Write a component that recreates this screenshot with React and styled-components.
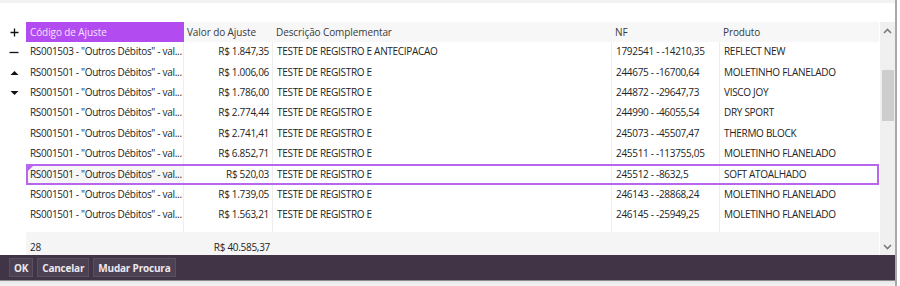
import React from 'react';
import styled, { createGlobalStyle } from 'styled-components';

const GlobalStyle = createGlobalStyle`
  body {
    margin: 0;
    background: #fff;
    font-family: 'Open Sans', 'Noto Sans', sans-serif;
  }
`;

const COLS = '26px 158px 89px 339px 108px 159px';

const Window = styled.div`
  width: 895px;
  height: 286px;
  border-right: 2px solid #a9a9a9;
  display: flex;
  flex-direction: column;
  background: #fff;
`;

const TopStrip = styled.div`
  height: 3px;
  background: #f2f2f2;
`;

const Body = styled.div`
  display: flex;
  padding-top: 19px;
  height: 233px;
`;

const Grid = styled.div`
  width: 879px;
  display: flex;
  flex-direction: column;
`;

const Row = styled.div`
  display: grid;
  grid-template-columns: ${COLS};
  height: ${p => p.h || 20.4}px;
  font-size: 10px;
  letter-spacing: -0.3px;
  color: #242424;
`;

const Gutter = styled.div`
  display: flex;
  align-items: center;
  justify-content: center;
  padding-left: 2px;
  background: #fff;
`;

const HeadCell = styled.div`
  display: flex;
  align-items: center;
  padding-left: ${p => (p.first ? 4 : 3)}px;
  background: ${p => (p.active ? '#b24bf0' : '#f7f7f7')};
  color: ${p => (p.active ? '#f3e2ff' : '#3a3a3a')};
  letter-spacing: -0.1px;
`;

const Cell = styled.div`
  display: flex;
  align-items: center;
  justify-content: ${p => (p.right ? 'flex-end' : 'flex-start')};
  padding: 0 ${p => (p.right ? 3 : 0)}px 2px ${p => (p.right ? 0 : 4)}px;
  border-right: 1px solid ${p => (p.last ? 'transparent' : '#eeeeee')};
  white-space: nowrap;
  overflow: hidden;
  background: ${p => (p.focus ? '#f6f6f6' : '#fff')};
`;

const SelRow = styled(Row)`
  position: relative;
  &::after {
    content: '';
    position: absolute;
    left: 26px;
    right: 0;
    top: 0;
    bottom: 0;
    border: 2px solid #b866ee;
    pointer-events: none;
  }
`;

const Corner = styled.div`
  position: absolute;
  left: 28px;
  top: 2px;
  width: 0;
  height: 0;
  border-top: 5px solid #b866ee;
  border-right: 5px solid transparent;
`;

const Filler = styled.div`
  display: grid;
  grid-template-columns: ${COLS};
  flex: 1;
`;

const FillCell = styled.div`
  border-right: 1px solid ${p => (p.line ? '#eeeeee' : 'transparent')};
`;

const Footer = styled.div`
  display: grid;
  grid-template-columns: ${COLS};
  height: 23px;
  font-size: 10px;
  letter-spacing: -0.3px;
  color: #242424;
`;

const FootCell = styled.div`
  display: flex;
  align-items: center;
  justify-content: ${p => (p.right ? 'flex-end' : 'flex-start')};
  padding: 6px ${p => (p.right ? 3 : 0)}px 0 ${p => (p.right ? 0 : 4)}px;
  background: #f5f5f5;
`;

const Scroll = styled.div`
  width: 15px;
  margin-left: 1px;
  background: #f0f0f0;
  display: flex;
  flex-direction: column;
  align-items: center;
`;

const Arrow = styled.div`
  height: 17px;
  display: flex;
  align-items: center;
  justify-content: center;
  padding-top: ${p => (p.down ? 4 : 0)}px;
`;

const Thumb = styled.div`
  width: 12px;
  height: 51px;
  margin-top: 31px;
  background: #cdcdcd;
`;

const Track = styled.div`
  flex: 1;
`;

const ButtonBar = styled.div`
  height: 25px;
  background: #413447;
  display: flex;
  align-items: center;
  gap: 4px;
  padding-left: 9px;
`;

const Button = styled.button`
  height: 19px;
  padding: 0 4px;
  background: #4c4053;
  border: 1px solid #5a4e61;
  color: #ece8ee;
  font-family: 'Open Sans', 'Noto Sans', sans-serif;
  font-weight: 700;
  font-size: 10px;
  letter-spacing: -0.2px;
  line-height: 1;
`;

const Bottom = styled.div`
  flex: 1;
  border-top: 1px solid #8c8c8c;
  background: linear-gradient(#e6e6e6, #f4f4f4);
`;

const Chevron = ({ up }) => (
  <svg width="9" height="6" viewBox="0 0 9 6">
    <path d={up ? 'M1 5 L4.5 1.5 L8 5' : 'M1 1 L4.5 4.5 L8 1'} fill="none" stroke="#7a7a7a" strokeWidth="1.6" />
  </svg>
);

const GutterIcon = ({ kind }) => {
  if (kind === 'plus') return (
    <svg width="9" height="9" viewBox="0 0 9 9"><path d="M4.5 0.5 V8.5 M0.5 4.5 H8.5" stroke="#111" strokeWidth="1.3" /></svg>
  );
  if (kind === 'minus') return (
    <svg width="10" height="9" viewBox="0 0 10 9"><path d="M0.5 4.5 H9.5" stroke="#111" strokeWidth="1.3" /></svg>
  );
  if (kind === 'up') return (
    <svg width="9" height="6" viewBox="0 0 9 6"><path d="M0.5 5 L4.5 1 L8.5 5 Z" fill="#111" /></svg>
  );
  if (kind === 'down') return (
    <svg width="9" height="6" viewBox="0 0 9 6"><path d="M0.5 1 L4.5 5 L8.5 1 Z" fill="#111" /></svg>
  );
  return null;
};

const code = (n) => `RS00150${n} - "Outros Débitos" - val...`;

const rows = [
  { c: code(3), v: 'R$ 1.847,35', d: 'TESTE DE REGISTRO E ANTECIPACAO', nf: '1792541 - -14210,35', p: 'REFLECT NEW', icon: 'minus' },
  { c: code(1), v: 'R$ 1.006,06', d: 'TESTE DE REGISTRO E', nf: '244675 - -16700,64', p: 'MOLETINHO FLANELADO', icon: 'up' },
  { c: code(1), v: 'R$ 1.786,00', d: 'TESTE DE REGISTRO E', nf: '244872 - -29647,73', p: 'VISCO JOY', icon: 'down' },
  { c: code(1), v: 'R$ 2.774,44', d: 'TESTE DE REGISTRO E', nf: '244990 - -46055,54', p: 'DRY SPORT' },
  { c: code(1), v: 'R$ 2.741,41', d: 'TESTE DE REGISTRO E', nf: '245073 - -45507,47', p: 'THERMO BLOCK' },
  { c: code(1), v: 'R$ 6.852,71', d: 'TESTE DE REGISTRO E', nf: '245511 - -113755,05', p: 'MOLETINHO FLANELADO' },
  { c: code(1), v: 'R$ 520,03', d: 'TESTE DE REGISTRO E', nf: '245512 - -8632,5', p: 'SOFT ATOALHADO', sel: true },
  { c: code(1), v: 'R$ 1.739,05', d: 'TESTE DE REGISTRO E', nf: '246143 - -28868,24', p: 'MOLETINHO FLANELADO' },
  { c: code(1), v: 'R$ 1.563,21', d: 'TESTE DE REGISTRO E', nf: '246145 - -25949,25', p: 'MOLETINHO FLANELADO' },
];

const DataRow = ({ r }) => {
  const R = r.sel ? SelRow : Row;
  return (
    <R>
      <Gutter>{r.icon && <GutterIcon kind={r.icon} />}</Gutter>
      <Cell focus={r.sel}>{r.c}</Cell>
      <Cell right>{r.v}</Cell>
      <Cell>{r.d}</Cell>
      <Cell>{r.nf}</Cell>
      <Cell last>{r.p}</Cell>
      {r.sel && <Corner />}
    </R>
  );
};

export default function App() {
  return (
    <>
      <GlobalStyle />
      <Window>
        <TopStrip />
        <Body>
          <Grid>
            <Row h={20}>
              <Gutter><GutterIcon kind="plus" /></Gutter>
              <HeadCell active first>Código de Ajuste</HeadCell>
              <HeadCell>Valor do Ajuste</HeadCell>
              <HeadCell>Descrição Complementar</HeadCell>
              <HeadCell>NF</HeadCell>
              <HeadCell>Produto</HeadCell>
            </Row>
            {rows.map((r, i) => <DataRow key={i} r={r} />)}
            <Filler>
              <FillCell />
              <FillCell line />
              <FillCell line />
              <FillCell line />
              <FillCell line />
              <FillCell />
            </Filler>
            <Footer>
              <Gutter />
              <FootCell>28</FootCell>
              <FootCell right>R$ 40.585,37</FootCell>
              <FootCell />
              <FootCell />
              <FootCell />
            </Footer>
          </Grid>
          <Scroll>
            <Arrow><Chevron up /></Arrow>
            <Thumb />
            <Track />
            <Arrow down><Chevron /></Arrow>
          </Scroll>
        </Body>
        <ButtonBar>
          <Button>OK</Button>
          <Button>Cancelar</Button>
          <Button>Mudar Procura</Button>
        </ButtonBar>
        <Bottom />
      </Window>
    </>
  );
}
